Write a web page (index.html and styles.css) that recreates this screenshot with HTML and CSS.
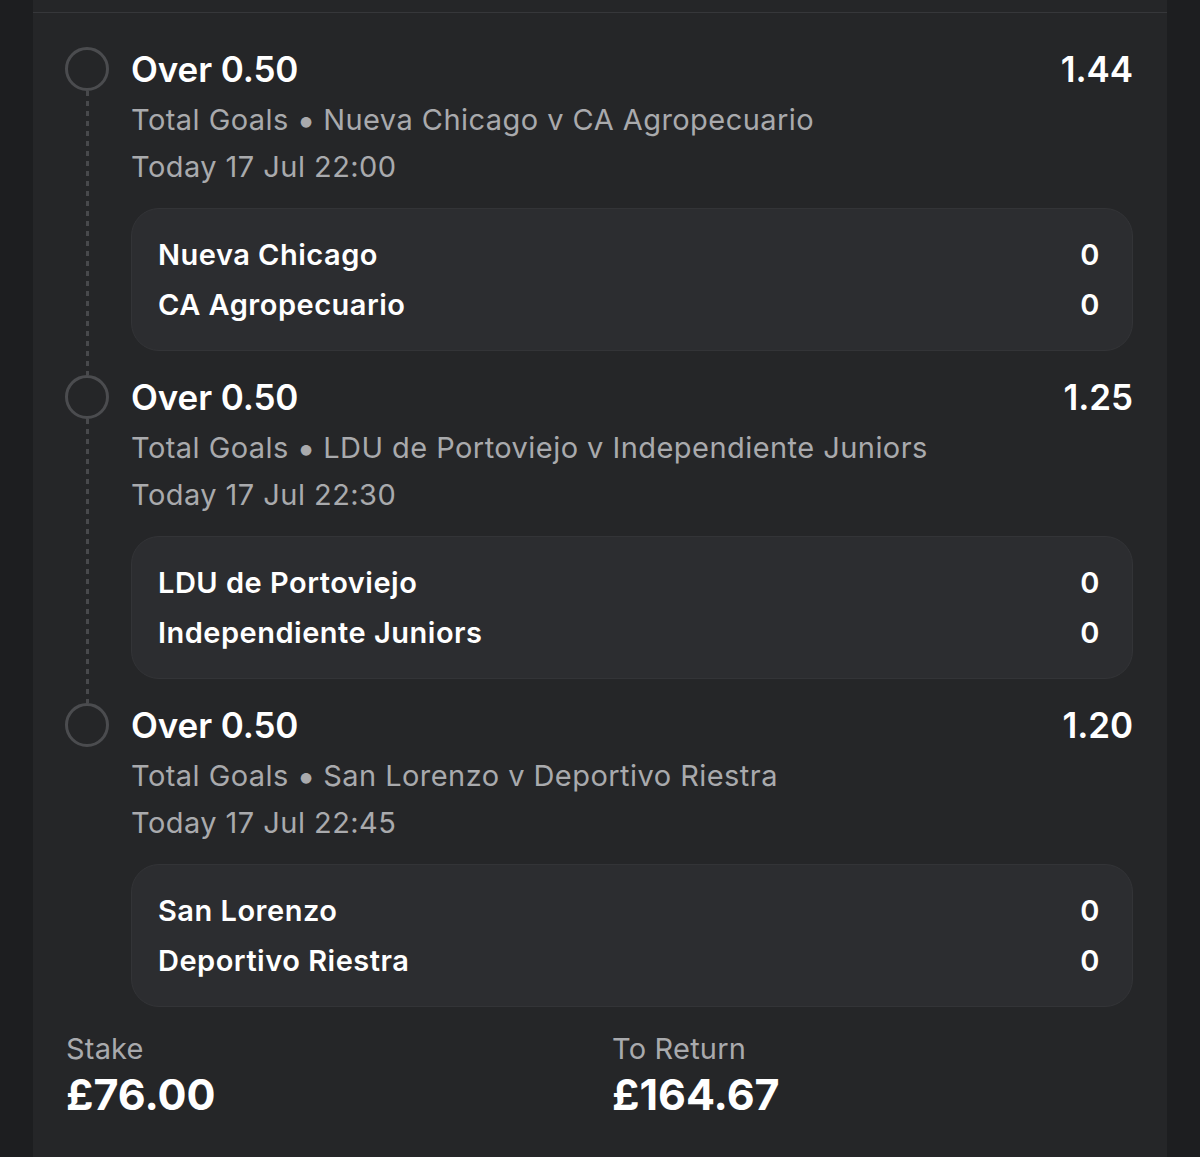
FILE: index.html
```html
<!DOCTYPE html>
<html>
<head>
<meta charset="utf-8">
<link rel="stylesheet" href="styles.css">
</head>
<body>
<div class="card">
  <div class="card-top"></div>
  <div class="legs">
    <div class="leg">
      <div class="timeline"><span class="dot"></span><span class="line"></span></div>
      <div class="leg-body">
        <div class="leg-head"><span class="sel">Over 0.50</span><span class="odds">1.44</span></div>
        <div class="meta">Total Goals <span class="sep">•</span> Nueva Chicago v CA Agropecuario</div>
        <div class="meta">Today 17 Jul 22:00</div>
        <div class="score">
          <div class="score-row"><span>Nueva Chicago</span><span>0</span></div>
          <div class="score-row"><span>CA Agropecuario</span><span>0</span></div>
        </div>
      </div>
    </div>
    <div class="leg">
      <div class="timeline"><span class="dot"></span><span class="line"></span></div>
      <div class="leg-body">
        <div class="leg-head"><span class="sel">Over 0.50</span><span class="odds">1.25</span></div>
        <div class="meta">Total Goals <span class="sep">•</span> LDU de Portoviejo v Independiente Juniors</div>
        <div class="meta">Today 17 Jul 22:30</div>
        <div class="score">
          <div class="score-row"><span>LDU de Portoviejo</span><span>0</span></div>
          <div class="score-row"><span>Independiente Juniors</span><span>0</span></div>
        </div>
      </div>
    </div>
    <div class="leg">
      <div class="timeline"><span class="dot"></span></div>
      <div class="leg-body">
        <div class="leg-head"><span class="sel">Over 0.50</span><span class="odds">1.20</span></div>
        <div class="meta">Total Goals <span class="sep">•</span> San Lorenzo v Deportivo Riestra</div>
        <div class="meta">Today 17 Jul 22:45</div>
        <div class="score">
          <div class="score-row"><span>San Lorenzo</span><span>0</span></div>
          <div class="score-row"><span>Deportivo Riestra</span><span>0</span></div>
        </div>
      </div>
    </div>
  </div>
  <div class="totals">
    <div class="total">
      <div class="total-label">Stake</div>
      <div class="total-value">£76.00</div>
    </div>
    <div class="total">
      <div class="total-label">To Return</div>
      <div class="total-value">£164.67</div>
    </div>
  </div>
</div>
</body>
</html>
```
FILE: styles.css
```css
html, body {
  margin: 0;
  padding: 0;
  background: #1d1e20;
  font-family: Inter, "Noto Sans", "Liberation Sans", sans-serif;
  color: #ffffff;
}
.card {
  margin-left: 33px;
  width: 1134px;
  height: 1157px;
  background: #252628;
  box-sizing: border-box;
}
.card-top {
  height: 12px;
  border-bottom: 1px solid #36373a;
}
.legs {
  padding: 34px 34px 0 32px;
}
.leg {
  display: grid;
  grid-template-columns: 44px 1fr;
  column-gap: 22px;
}
.timeline {
  display: flex;
  flex-direction: column;
  align-items: center;
}
.dot {
  width: 44px;
  height: 44px;
  box-sizing: border-box;
  border: 3.5px solid #4b4c4f;
  border-radius: 50%;
  flex: none;
}
.line {
  flex: 1;
  width: 3px;
  background: repeating-linear-gradient(to bottom, #48494c 0 5px, transparent 5px 10px);
}
.leg-body {
  padding-bottom: 24px;
}
.leg-head {
  display: flex;
  justify-content: space-between;
  align-items: center;
  height: 44px;
  font-size: 35px;
  font-weight: 600;
  letter-spacing: -0.1px;
}
.meta {
  font-size: 29px;
  line-height: 47px;
  letter-spacing: 0.45px;
  color: #a9aaad;
}
.sep {
  font-size: 34px;
  line-height: 0;
  vertical-align: -2px;
  letter-spacing: 0;
  margin: 0 -1px;
}
.leg-head + .meta {
  margin-top: 5px;
}
.score {
  margin-top: 18px;
  background: #2c2d30;
  border: 1px solid #333437;
  border-radius: 28px;
  padding: 21px 32px 20px 26px;
}
.score-row {
  display: flex;
  justify-content: space-between;
  font-size: 29px;
  font-weight: 600;
  line-height: 50px;
  letter-spacing: 0.5px;
}
.totals {
  display: grid;
  grid-template-columns: 1fr 1fr;
  column-gap: 24px;
  padding: 0 33px 0 33px;
}
.total-label {
  font-size: 29px;
  line-height: 36px;
  letter-spacing: 0.2px;
  color: #a9aaad;
}
.total-value {
  font-size: 43px;
  font-weight: 700;
  line-height: 54px;
}
```
